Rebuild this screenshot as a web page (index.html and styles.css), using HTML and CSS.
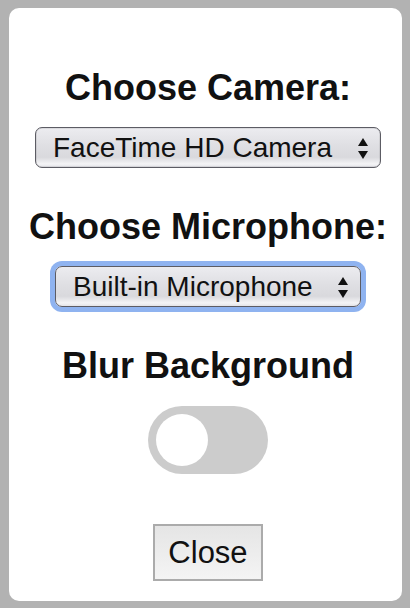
FILE: index.html
```html
<!DOCTYPE html>
<html lang="en">
<head>
  <meta charset="UTF-8" />
  <meta name="viewport" content="width=device-width, initial-scale=1.0" />
  <title>Settings</title>
  <link rel="stylesheet" href="styles.css">
</head>
<body>
  <div class="dialog">
    <div class="field">
      <h2 class="label">Choose Camera:</h2>
      <span class="picker">
        <select class="select">
          <option>FaceTime HD Camera</option>
        </select>
        <svg class="arrows" width="10" height="21" viewBox="0 0 10 21"><path d="M5 0L10 8H0Z M0 13H10L5 21Z" fill="#111"/></svg>
      </span>
    </div>
    <div class="field">
      <h2 class="label">Choose Microphone:</h2>
      <span class="picker">
        <select class="select focused">
          <option>Built-in Microphone</option>
        </select>
        <svg class="arrows" width="10" height="21" viewBox="0 0 10 21"><path d="M5 0L10 8H0Z M0 13H10L5 21Z" fill="#111"/></svg>
      </span>
    </div>
    <div class="field">
      <h2 class="label">Blur Background</h2>
      <label class="switch">
        <input type="checkbox">
        <span class="knob"></span>
      </label>
    </div>
    <button class="close-btn">Close</button>
  </div>
</body>
</html>
```

FILE: styles.css
```css
* { margin: 0; padding: 0; box-sizing: border-box; }
html, body {
  width: 100%; height: 100%; overflow: hidden;
}
body {
  background: #b2b2b2;
  padding: 8px 8px 7px 9px;
  font-family: 'Liberation Sans', Arial, sans-serif;
  color: #111;
}

.dialog {
  height: 100%; background: #fff; border-radius: 10px;
  display: flex; flex-direction: column; align-items: center;
  padding: 60px 0 0 5px; gap: 39px;
}
.field { display: flex; flex-direction: column; align-items: center; gap: 19px; }
.label { font-size: 36px; font-weight: bold; line-height: 40px; white-space: nowrap; }

.picker { position: relative; display: inline-block; }
.select {
  appearance: none; -webkit-appearance: none;
  height: 41px; padding: 0 47px 0 17px;
  font-family: inherit; font-size: 28px; color: #111;
  border: 1px solid #5c5c64; border-radius: 7px;
  background: linear-gradient(to bottom, #ececf0 0%, #dfdfe3 45%, #d9d9dd 75%, #f4f4f6 92%, #e4e4e8 100%);
  box-shadow: inset 0 0 0 0.5px rgba(0,0,0,0.15);
  outline: none;
}
.select.focused { box-shadow: 0 0 0 5px #8fb3f0; }
.arrows {
  position: absolute; right: 13px; top: 50%; margin-top: -10px;
  pointer-events: none;
}

.switch { position: relative; display: block; width: 120px; height: 68px; margin-top: 1px; }
.switch input { opacity: 0; width: 0; height: 0; }
.knob {
  position: absolute; inset: 0; background: #ccc; border-radius: 34px; cursor: pointer;
}
.knob::before {
  content: ""; position: absolute; left: 8px; top: 8px;
  width: 52px; height: 52px; border-radius: 50%; background: #fff;
}

.close-btn {
  margin-top: 11px; width: 110px; height: 57px;
  font-family: inherit; font-size: 31px; color: #111;
  border: 2px solid #ababab;
  background: linear-gradient(to bottom, #e5e5e5, #f4f4f4);
  cursor: pointer;
}
```
